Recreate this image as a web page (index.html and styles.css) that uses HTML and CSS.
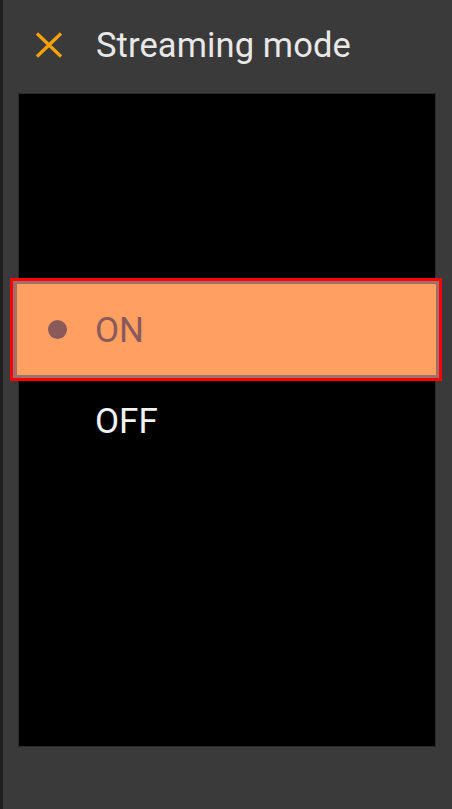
FILE: index.html
```html
<!DOCTYPE html>
<html>
<head>
<meta charset="utf-8">
<link rel="stylesheet" href="styles.css">
</head>
<body>
<div class="screen">
  <header class="header">
    <svg class="close" width="28" height="26" viewBox="0 0 28 26">
      <path d="M2 1.5 L26 24.5 M26 1.5 L2 24.5" stroke="#f9a10b" stroke-width="3.2" stroke-linecap="butt" fill="none"/>
    </svg>
    <h1 class="title">Streaming mode</h1>
  </header>
  <main class="panel">
    <ul class="list">
      <li class="item selected"><span class="dot"></span><span class="label">ON</span></li>
      <li class="item"><span class="dot empty"></span><span class="label">OFF</span></li>
    </ul>
  </main>
</div>
</body>
</html>
```
FILE: styles.css
```css
html, body {
  margin: 0;
  padding: 0;
  width: 452px;
  height: 809px;
  overflow: hidden;
  background: #3a3a3a;
}
.screen {
  box-sizing: border-box;
  width: 452px;
  height: 809px;
  border-left: 3px solid #1f1f1f;
  display: flex;
  flex-direction: column;
  font-family: Roboto, "Liberation Sans", sans-serif;
}
.header {
  height: 93px;
  display: flex;
  align-items: center;
  box-sizing: border-box;
  padding: 0 0 0 32px;
}
.close {
  display: block;
  margin-top: -4px;
}
.title {
  margin: 0 0 0 33px;
  margin-top: -3px;
  font-weight: 400;
  font-size: 34.5px;
  color: #e8e8e8;
  letter-spacing: 0.1px;
}
.panel {
  box-sizing: border-box;
  margin: 0 16px 0 15px;
  height: 654px;
  background: #000;
  border: 1px solid #2a2a2a;
}
.list {
  list-style: none;
  margin: 187px 0 0 0;
  padding: 0;
}
.item {
  display: flex;
  align-items: center;
  height: 84px;
  box-sizing: border-box;
  padding-left: 29px;
  color: #f2f2f2;
  font-size: 35px;
}
.item.selected {
  height: 97px;
  margin: 0 -4px 0 -6px;
  padding-left: 31px;
  background: #ffa062;
  border: 3px solid #a06f6a;
  border-left-width: 4px;
  outline: 3px solid #ff0000;
  color: #8a5a5a;
}
.dot {
  width: 19px;
  height: 19px;
  border-radius: 50%;
  background: #8a5a5a;
  flex: none;
}
.dot.empty {
  background: transparent;
}
.label {
  margin-left: 28px;
  margin-top: 2px;
}
```
